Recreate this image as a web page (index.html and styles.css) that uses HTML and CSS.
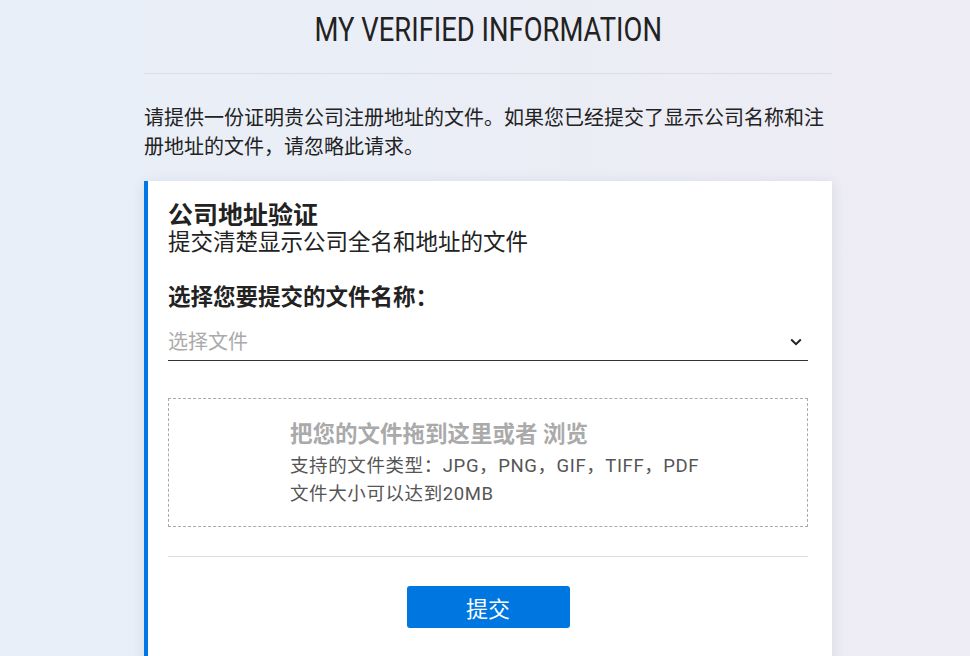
FILE: index.html
```html
<!DOCTYPE html>
<html lang="zh-CN">
<head>
    <meta charset="UTF-8">
    <title>My Verified Information</title>
    <link rel="stylesheet" href="styles.css">
</head>
<body>
<div class="page">
    <h1 class="title"><span>MY VERIFIED INFORMATION</span></h1>
    <p class="intro">请提供一份证明贵公司注册地址的文件。如果您已经提交了显示公司名称和注册地址的文件，请忽略此请求。</p>

    <div class="card">
        <div class="cardHead">
            <div class="cardTitle">公司地址验证</div>
            <div class="cardSub">提交清楚显示公司全名和地址的文件</div>
        </div>

        <div class="label">选择您要提交的文件名称：</div>
        <div class="select">
            <span class="placeholder">选择文件</span>
            <svg class="arrow" width="12" height="8" viewBox="0 0 12 8">
                <path d="M1.2 1.5 L6 6.2 L10.8 1.5" fill="none" stroke="#222" stroke-width="2"/>
            </svg>
        </div>

        <div class="drop">
            <div class="dropTitle">把您的文件拖到这里或者 浏览</div>
            <div class="dropInfo">支持的文件类型：JPG，PNG，GIF，TIFF，PDF</div>
            <div class="dropInfo">文件大小可以达到20MB</div>
        </div>

        <div class="line"></div>
        <div class="submit"><button class="btn">提交</button></div>
    </div>
</div>
</body>
</html>
```
FILE: styles.css
```css
html, body {
    margin: 0;
    height: 100%;
}

body {
    background: linear-gradient(90deg, #e8eff8 0%, #ebedf5 60%, #eeecf4 100%);
    font-family: Roboto, "Noto Sans CJK SC", sans-serif;
    color: #222;
    overflow: hidden;
}

.page {
    width: 688px;
    margin: 0 auto;
    padding-left: 6px;
}

.title {
    margin: 0;
    padding-top: 11px;
    height: 74px;
    box-sizing: border-box;
    border-bottom: 1px solid #dcdde2;
    text-align: center;
    font-family: Roboto, sans-serif;
    font-weight: 400;
    font-size: 33px;
    line-height: 38px;
}

.title span {
    display: inline-block;
    transform: scaleX(0.83);
}

.intro {
    margin: 30px 0 0;
    font-size: 20px;
    line-height: 29px;
    color: #222;
}

.card {
    margin-top: 19px;
    background: #fff;
    border-left: 4px solid #0077e6;
    padding: 22px 24px 26px 20px;
    box-shadow: 0 2px 12px rgba(60, 70, 110, 0.12);
    height: 480px;
}

.cardTitle {
    font-size: 25px;
    font-weight: 700;
    line-height: 26px;
}

.cardSub {
    font-size: 22.5px;
    line-height: 26px;
    color: #222;
}

.label {
    margin-top: 28px;
    font-size: 22.5px;
    font-weight: 700;
    line-height: 28px;
}

.select {
    margin-top: 15px;
    display: flex;
    align-items: center;
    justify-content: space-between;
    height: 34px;
    border-bottom: 1.5px solid #333;
}

.placeholder {
    padding-bottom: 5px;
    font-size: 20px;
    color: #aaa;
}

.arrow {
    margin: 0 6px 3px 0;
}

.drop {
    margin-top: 37px;
    height: 129px;
    box-sizing: border-box;
    border: 1px dashed #aaa;
    padding: 21px 0 0 121px;
}

.dropTitle {
    margin-bottom: 4px;
    font-size: 22.5px;
    font-weight: 700;
    color: #aaa;
    line-height: 28px;
}

.dropInfo {
    font-size: 18.5px;
    letter-spacing: 0.6px;
    color: #555;
    line-height: 28px;
}

.line {
    margin-top: 29px;
    border-top: 1px solid #ddd;
}

.submit {
    margin-top: 29px;
    text-align: center;
}

.btn {
    width: 163px;
    height: 42px;
    border: none;
    border-radius: 3px;
    background: #0077e0;
    color: #fff;
    font-size: 22px;
    font-family: Roboto, "Noto Sans CJK SC", sans-serif;
    cursor: pointer;
}
```
